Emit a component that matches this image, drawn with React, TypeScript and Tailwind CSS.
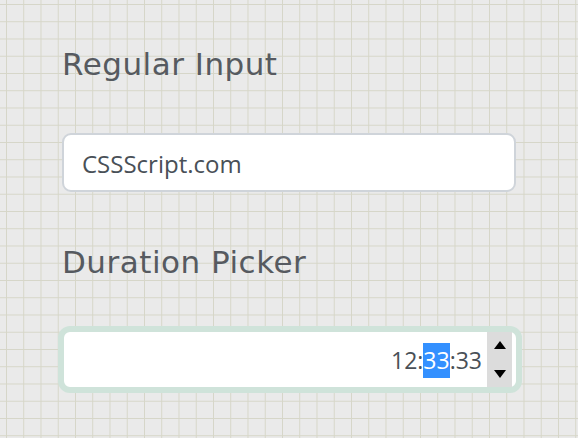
import React from "react";

export default function App() {
  return (
    <div
      className="w-[578px] h-[438px] overflow-hidden bg-[#eaeaea] bg-[linear-gradient(to_right,#d6d6c8_1px,transparent_1px),linear-gradient(to_bottom,#d6d6c8_1px,transparent_1px)] bg-[size:17.25px_17.25px] bg-[position:6px_4px] pl-[62px] pt-[44px]"
    >
      <h2 className="font-['DejaVu_Sans',sans-serif] font-normal text-[31px] leading-[40px] text-[#565a60] tracking-[0.5px]">
        Regular Input
      </h2>
      <div className="mt-[49px] w-[454px] h-[59px] rounded-[9px] border-2 border-[#cfd4da] bg-white flex items-center pl-[18px] pt-[3px] font-['Open_Sans',sans-serif] text-[24px] text-[#495057]">
        CSSScript.com
      </div>
      <h2 className="mt-[50px] font-['DejaVu_Sans',sans-serif] font-normal text-[31px] leading-[40px] text-[#565a60] tracking-[0.5px]">
        Duration Picker
      </h2>
      <div className="mt-[48px] w-[456px] h-[59px] rounded-[8px] border-2 border-[#cfe3da] shadow-[0_0_0_4px_#cfe3da] bg-white flex items-stretch justify-end pr-[4px] font-['Open_Sans',sans-serif] text-[23px] text-[#495057]">
        <div className="flex items-center pr-[5px] pt-[2px]">
          <span>12:</span>
          <span className="bg-[#3390ff] text-white">33</span>
          <span>:33</span>
        </div>
        <div className="w-[25px] bg-[#dcdcdc] flex flex-col items-center justify-between py-[9px]">
          <svg width="12" height="8" viewBox="0 0 12 8">
            <polygon points="6,0 12,8 0,8" fill="#000" />
          </svg>
          <svg width="12" height="8" viewBox="0 0 12 8">
            <polygon points="0,0 12,0 6,8" fill="#000" />
          </svg>
        </div>
      </div>
    </div>
  );
}
